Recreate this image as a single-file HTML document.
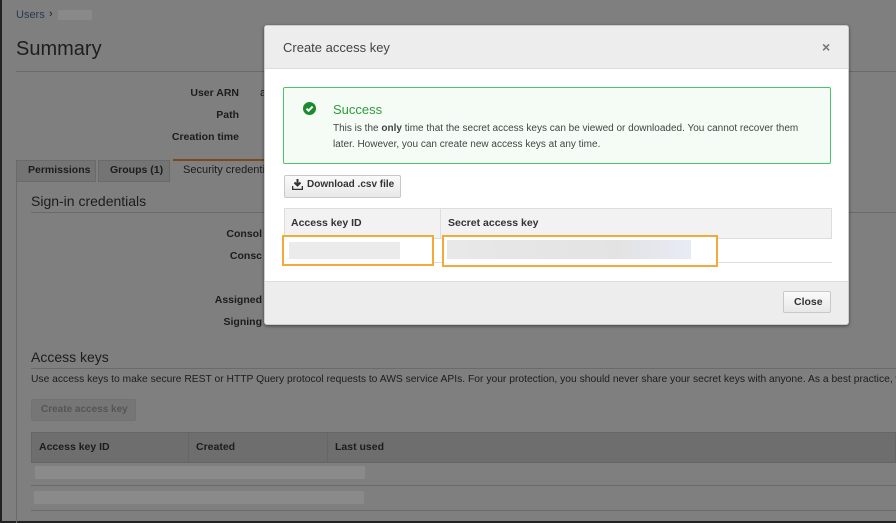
<!DOCTYPE html>
<html><head><meta charset="utf-8"><style>
*{box-sizing:border-box;margin:0;padding:0}
html,body{overflow:hidden}
body{width:896px;height:523px;background:#7f7f7f;font-family:"Liberation Sans",sans-serif;color:#1c1c1c;position:relative;font-size:11px}
.a{position:absolute;white-space:nowrap}
.b{font-weight:bold;font-size:10.5px}
.blur{position:absolute;background:#8a8a8a}
</style></head><body>
<div class="a" style="left:0;top:0;width:2px;height:523px;background:#222"></div>
<div class="a" style="left:0;top:521px;width:896px;height:2px;background:#222"></div>
<div class="a" style="left:16px;top:9px;color:#283a52">Users</div>
<div class="a" style="left:49px;top:8px;color:#222">›</div>
<div class="a" style="left:58px;top:10px;width:34px;height:10px;background:#898989"></div>
<div class="a" style="left:16px;top:38px;font-size:20px;color:#1e1e1e">Summary</div>
<div class="a" style="left:16px;top:71px;width:880px;height:1px;background:#6a6a6a"></div>
<div class="a b" style="left:140px;top:87px;width:99px;text-align:right">User ARN</div>
<div class="a b" style="left:140px;top:109px;width:99px;text-align:right">Path</div>
<div class="a b" style="left:140px;top:131px;width:99px;text-align:right">Creation time</div>
<div class="a" style="left:260px;top:87px">a</div>
<div class="a" style="left:16px;top:160px;width:80px;height:22px;background:#747474;border:1px solid #6a6a6a"></div>
<div class="a b" style="left:28px;top:164px">Permissions</div>
<div class="a" style="left:98px;top:160px;width:72px;height:22px;background:#747474;border:1px solid #6a6a6a"></div>
<div class="a b" style="left:110px;top:164px">Groups (1)</div>
<div class="a" style="left:173px;top:159px;width:100px;height:24px;background:#7f7f7f;border-top:2px solid #7a4a1a"></div>
<div class="a" style="left:183px;top:164px">Security credentia</div>
<div class="a" style="left:16px;top:182px;width:1px;height:341px;background:#6a6a6a"></div>
<div class="a" style="left:31px;top:193px;font-size:14px">Sign-in credentials</div>
<div class="a" style="left:31px;top:212px;width:865px;height:1px;background:#6a6a6a"></div>
<div class="a b" style="left:200px;top:228px;width:62px;text-align:right">Consol</div>
<div class="a b" style="left:200px;top:250px;width:62px;text-align:right">Consc</div>
<div class="a b" style="left:200px;top:294px;width:62px;text-align:right">Assigned</div>
<div class="a b" style="left:200px;top:316px;width:62px;text-align:right">Signing</div>
<div class="a" style="left:31px;top:349px;font-size:14px">Access keys</div>
<div class="a" style="left:31px;top:368px;width:865px;height:1px;background:#6a6a6a"></div>
<div class="a" style="left:31px;top:374px;font-size:10.3px;width:865px;overflow:hidden">Use access keys to make secure REST or HTTP Query protocol requests to AWS service APIs. For your protection, you should never share your secret keys with anyone. As a best practice, we recon</div>
<div class="a" style="left:31px;top:399px;width:105px;height:22px;background:#767676;border-radius:2px;border:1px solid #727272"></div>
<div class="a b" style="left:41px;top:404px;color:#555;font-size:10px">Create access key</div>
<div class="a" style="left:31px;top:432px;width:865px;height:31px;background:#6e6e6e;border:1px solid #666"></div>
<div class="a" style="left:188px;top:432px;width:1px;height:31px;background:#666"></div>
<div class="a" style="left:327px;top:432px;width:1px;height:31px;background:#666"></div>
<div class="a b" style="left:39px;top:441px">Access key ID</div>
<div class="a b" style="left:196px;top:441px">Created</div>
<div class="a b" style="left:335px;top:441px">Last used</div>
<div class="blur" style="left:35px;top:466px;width:330px;height:13px"></div>
<div class="a" style="left:31px;top:485px;width:865px;height:1px;background:#6a6a6a"></div>
<div class="blur" style="left:34px;top:491px;width:330px;height:13px"></div>
<div class="a" style="left:31px;top:510px;width:865px;height:1px;background:#6a6a6a"></div>

<div class="a" style="left:264px;top:25px;width:585px;height:300px;background:#fff;border:1px solid #ccc;border-radius:3px;box-shadow:0 1px 3px rgba(0,0,0,.5);overflow:hidden">
 <div class="a" style="left:0;top:0;width:585px;height:43px;background:#ededed;border-bottom:1px solid #ddd"></div>
 <div class="a" style="left:18px;top:14px;font-size:13px;color:#444">Create access key</div>
 <div class="a" style="left:557px;top:13px;font-size:14px;font-weight:bold;color:#777">×</div>
 <div class="a" style="left:18px;top:61px;width:548px;height:77px;background:#f4fcf5;border:1px solid #4ac46a;border-radius:2px"></div>
 <svg class="a" style="left:38px;top:76px" width="13" height="13" viewBox="0 0 13 13"><circle cx="6.5" cy="6.5" r="6.5" fill="#1d8a2f"/><path d="M3.5 6.7L5.6 8.7L9.6 4.6" stroke="#fff" stroke-width="2" fill="none"/></svg>
 <div class="a" style="left:68px;top:76px;font-size:13px;color:#2e9b3f">Success</div>
 <div class="a" style="left:68px;top:95px;font-size:10px;color:#444;line-height:16px">This is the <b>only</b> time that the secret access keys can be viewed or downloaded. You cannot recover them<br>later. However, you can create new access keys at any time.</div>
 <div class="a" style="left:19px;top:149px;width:117px;height:23px;background:linear-gradient(#fafafa,#e8e8e8);border:1px solid #c8c8c8;border-radius:2px"></div>
 <svg class="a" style="left:27px;top:153px" width="11" height="11" viewBox="0 0 11 11"><path d="M5.5 0V6M2.5 3.5L5.5 6.5L8.5 3.5" stroke="#333" stroke-width="2" fill="none"/><path d="M0.5 7V10.5H10.5V7" stroke="#333" stroke-width="1.6" fill="none"/></svg>
 <div class="a b" style="left:42px;top:153px;font-size:10px;color:#333">Download .csv file</div>
 <div class="a" style="left:19px;top:182px;width:548px;height:31px;background:#f2f2f2;border:1px solid #ddd"></div>
 <div class="a" style="left:175px;top:182px;width:1px;height:31px;background:#ddd"></div>
 <div class="a b" style="left:26px;top:191px;color:#333">Access key ID</div>
 <div class="a b" style="left:183px;top:191px;color:#333">Secret access key</div>
 <div class="a" style="left:19px;top:236px;width:548px;height:1px;background:#ddd"></div>
 <div class="a" style="left:17px;top:209px;width:152px;height:31px;background:#fff;border:2px solid #f4a93b"></div>
 <div class="a" style="left:24px;top:216px;width:111px;height:17px;background:#ebebeb"></div>
 <div class="a" style="left:177px;top:209px;width:276px;height:32px;background:#fff;border:2px solid #f4a93b"></div>
 <div class="a" style="left:182px;top:214px;width:244px;height:19px;background:linear-gradient(90deg,#e8e8e8,#e3e3e3 70%,#e8ebf6)"></div>
 <div class="a" style="left:0;top:255px;width:585px;height:45px;background:#ededed;border-top:1px solid #ddd"></div>
 <div class="a" style="left:518px;top:265px;width:48px;height:22px;background:linear-gradient(#fafafa,#e8e8e8);border:1px solid #c8c8c8;border-radius:2px"></div>
 <div class="a b" style="left:529px;top:270px;color:#333">Close</div>
</div>
</body></html>
